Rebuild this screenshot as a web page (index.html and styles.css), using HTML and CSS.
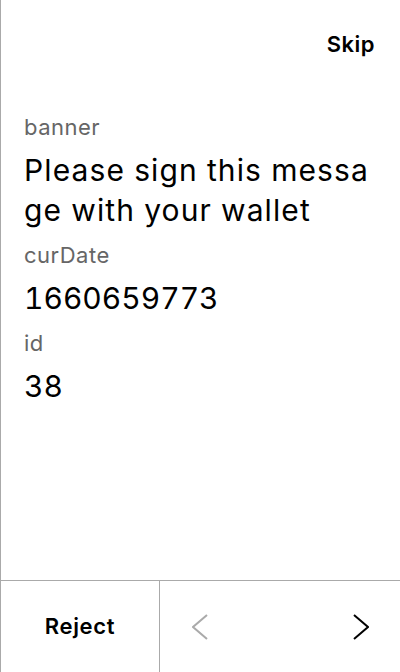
FILE: index.html
```html
<!DOCTYPE html>
<html>
<head>
<meta charset="utf-8">
<link rel="stylesheet" href="styles.css">
</head>
<body>
<div class="screen">
  <header class="top">
    <span class="skip">Skip</span>
  </header>
  <main class="content">
    <div class="field">
      <div class="label">banner</div>
      <div class="value value-text">Please sign this message with your wallet</div>
    </div>
    <div class="field">
      <div class="label">curDate</div>
      <div class="value">1660659773</div>
    </div>
    <div class="field">
      <div class="label">id</div>
      <div class="value">38</div>
    </div>
  </main>
  <footer class="bar">
    <div class="reject">Reject</div>
    <div class="nav">
      <svg class="chev" width="16" height="26" viewBox="0 0 16 26"><polyline points="15,1 1,13 15,25" fill="none" stroke="#aaaaaa" stroke-width="2"/></svg>
      <svg class="chev" width="16" height="26" viewBox="0 0 16 26"><polyline points="1,1 15,13 1,25" fill="none" stroke="#000000" stroke-width="2"/></svg>
    </div>
  </footer>
</div>
</body>
</html>
```
FILE: styles.css
```css
* { box-sizing: border-box; }
html, body { margin: 0; padding: 0; background: #fff; }
body { font-family: Inter, "Noto Sans", sans-serif; color: #000; }
.screen {
  width: 400px;
  height: 672px;
  border-left: 1px solid #aaaaaa;
  display: flex;
  flex-direction: column;
}
.top {
  height: 88px;
  display: flex;
  justify-content: flex-end;
  align-items: center;
  padding-right: 25px;
}
.skip { font-size: 22px; font-weight: 600; letter-spacing: 0.5px; }
.content {
  flex: 1;
  padding: 25px 23px 0 23px;
  display: flex;
  flex-direction: column;
  gap: 11px;
}
.label {
  font-size: 22px;
  line-height: 28px;
  color: #666666;
  margin-bottom: 9px;
  letter-spacing: 0.5px;
}
.value {
  font-size: 30px;
  line-height: 40px;
  word-break: break-all;
  font-variant-numeric: tabular-nums;
}
.value-text { letter-spacing: 1.1px; }
.bar {
  height: 92px;
  border-top: 1px solid #aaaaaa;
  display: flex;
}
.reject {
  width: 159px;
  border-right: 1px solid #aaaaaa;
  display: flex;
  align-items: center;
  justify-content: center;
  font-size: 22px;
  font-weight: 600;
  letter-spacing: 0.7px;
  padding-bottom: 2px;
}
.nav {
  flex: 1;
  display: flex;
  align-items: center;
  justify-content: space-between;
  padding: 0 31px 0 32px;
}
.chev { display: block; }
```
